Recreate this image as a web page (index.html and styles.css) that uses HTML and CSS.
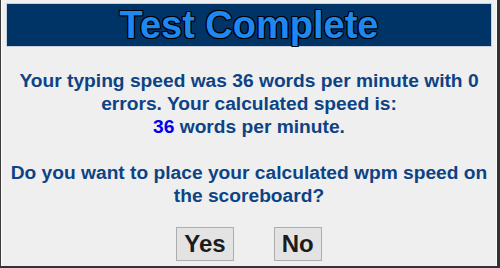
FILE: index.html
```html
<!DOCTYPE html>
<html>
<head>
<meta charset="utf-8">
<link rel="stylesheet" href="styles.css">
</head>
<body>
<div class="frame">
  <div class="title">Test Complete</div>
  <p class="message">Your typing speed was 36 words per minute with 0 errors. Your calculated speed is:<br><span class="wpm">36</span> words per minute.<br><br>Do you want to place your calculated wpm speed on the scoreboard?</p>
  <div class="actions">
    <button class="btn">Yes</button>
    <button class="btn">No</button>
  </div>
</div>
</body>
</html>
```
FILE: styles.css
```css
html, body {
  margin: 0;
  padding: 0;
  background: #efefef;
}
.frame {
  box-sizing: border-box;
  width: 500px;
  height: 268px;
  background: #efefef;
  border-left: 1px solid #3c3c3c;
  border-right: 3px solid #333;
  border-bottom: 2px solid #333;
  box-shadow: inset 1px 0 0 #fafafa, inset -1px 0 0 #fafafa;
  padding: 3px 5px 0 5px;
  font-family: "Liberation Sans", Arial, sans-serif;
  display: flex;
  flex-direction: column;
}
.title {
  background: #003366;
  border: 1px solid #c8d0dc;
  height: 42px;
  line-height: 42px;
  text-align: center;
  font-weight: bold;
  font-size: 38px;
  color: #1e88f0;
  text-shadow: 1px 0 0 #000, -1px 0 0 #000, 0 1px 0 #000, 0 -1px 0 #000,
    1px 1px 0 #000, -1px -1px 0 #000, 1px -1px 0 #000, -1px 1px 0 #000;
}
.message {
  margin: 22px 0 0 0;
  text-align: center;
  font-weight: bold;
  font-size: 19.2px;
  line-height: 23px;
  color: #0d4384;
}
.wpm {
  color: #0000f0;
}
.actions {
  margin-top: 20px;
  display: flex;
  justify-content: center;
  gap: 40px;
}
.btn {
  font-family: "Liberation Sans", Arial, sans-serif;
  font-weight: bold;
  font-size: 24px;
  line-height: 28px;
  padding: 2px 7px;
  border: 1px solid #adadad;
  background: #e3e3e3;
  color: #1c1c1c;
  margin: 0;
}
```
